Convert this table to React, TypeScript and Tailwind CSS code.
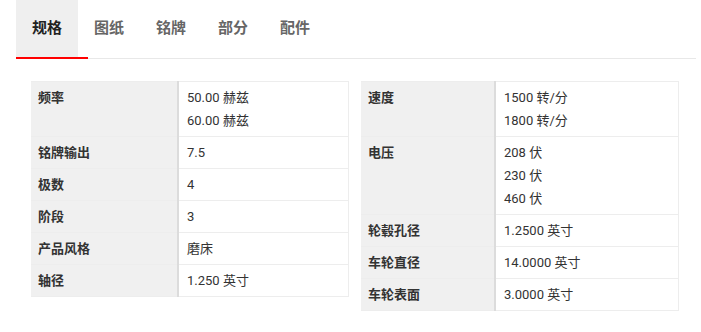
import React from 'react';

type Spec = { label: string; values: string[] };

const tabs = ['规格', '图纸', '铭牌', '部分', '配件'];

const leftSpecs: Spec[] = [
  { label: '频率', values: ['50.00 赫兹', '60.00 赫兹'] },
  { label: '铭牌输出', values: ['7.5'] },
  { label: '极数', values: ['4'] },
  { label: '阶段', values: ['3'] },
  { label: '产品风格', values: ['磨床'] },
  { label: '轴径', values: ['1.250 英寸'] },
];

const rightSpecs: Spec[] = [
  { label: '速度', values: ['1500 转/分', '1800 转/分'] },
  { label: '电压', values: ['208 伏', '230 伏', '460 伏'] },
  { label: '轮毂孔径', values: ['1.2500 英寸'] },
  { label: '车轮直径', values: ['14.0000 英寸'] },
  { label: '车轮表面', values: ['3.0000 英寸'] },
];

const SpecTable: React.FC<{ specs: Spec[]; labelWidth: string }> = ({ specs, labelWidth }) => {
  return (
    <table className="w-[318px] border-collapse border-t border-[#ededed] text-[13px] text-[#333]">
      <tbody>
        {specs.map((s) => (
          <tr key={s.label} className="border-b border-[#ededed]">
            <td
              className={`${labelWidth} bg-[#f0f0f0] pl-[7px] pt-[4px] pb-[4px] align-top font-semibold leading-[23px] text-[#333] border-r-2 border-[#dcdcdc]`}
            >
              {s.label}
            </td>
            <td className="bg-white pl-[8px] pt-[4px] pb-[4px] align-top leading-[23px] border-r border-[#ededed]">
              {s.values.map((v) => (
                <div key={v}>{v}</div>
              ))}
            </td>
          </tr>
        ))}
      </tbody>
    </table>
  );
};

export default function App() {
  return (
    <div
      className="w-[701px] h-[332px] bg-white"
      style={{ fontFamily: 'Roboto, "Noto Sans CJK SC", sans-serif' }}
    >
      <div className="ml-4 mr-[5px]">
        <div className="flex h-[57px]">
          {tabs.map((t, i) => (
            <div
              key={t}
              className={`flex items-center px-4 text-[15px] font-bold ${
                i === 0 ? 'bg-[#efefef] text-[#222]' : 'text-[#666]'
              }`}
            >
              {t}
            </div>
          ))}
        </div>
        <div className="flex h-[2px]">
          <div className="w-[72px] bg-[#ff0000]" />
          <div className="flex-1 border-b border-[#e8e8e8]" />
        </div>
      </div>
      <div className="flex gap-3 pl-[31px] pt-[22px] items-start">
        <SpecTable specs={leftSpecs} labelWidth="w-[147px]" />
        <SpecTable specs={rightSpecs} labelWidth="w-[134px]" />
      </div>
    </div>
  );
}
